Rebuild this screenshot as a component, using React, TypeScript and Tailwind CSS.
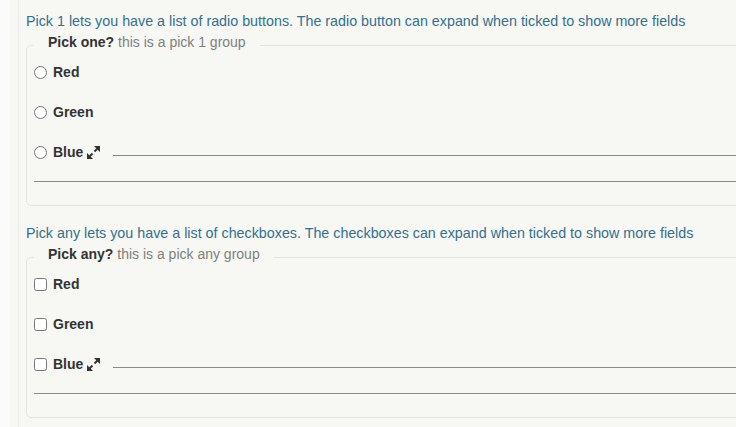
import React from "react";

const colours = ["Red", "Green", "Blue"];

function ExpandIcon() {
  return (
    <svg width="13" height="13" viewBox="0 0 13 13" className="shrink-0">
      <polygon points="13,0 7,0 13,6" fill="#333" />
      <line x1="11.5" y1="1.5" x2="7.5" y2="5.5" stroke="#333" strokeWidth="2" />
      <polygon points="0,13 0,7 6,13" fill="#333" />
      <line x1="1.5" y1="11.5" x2="5.5" y2="7.5" stroke="#333" strokeWidth="2" />
    </svg>
  );
}

function Group({ intro, title, note, type }: { intro: string; title: string; note: string; type: "radio" | "checkbox" }) {
  return (
    <div>
      <p className="h-5 leading-5 text-[14.3px] text-[#31708f] whitespace-nowrap">{intro}</p>
      <fieldset className="mt-[1px] w-[760px] border border-[#e3e4e0] rounded-[5px] pb-[23px]">
        <legend className="ml-[7px] pl-[14px] pr-[14px] pb-[6px] leading-5 text-[14px]">
          <span className="font-bold text-[#333]">{title}</span>{" "}
          <span className="text-[#808080]">{note}</span>
        </legend>
        <div className="pl-[7px]">
          <div className="flex flex-col gap-3">
            {colours.map((c) => (
              <label key={c} className="flex items-center h-7">
                <input type={type} name={title} className="w-[13px] h-[13px] shrink-0" />
                <span className="ml-[6px] font-bold text-[14px] text-[#333]">{c}</span>
                {c === "Blue" && (
                  <>
                    <span className="ml-[4px] flex"><ExpandIcon /></span>
                    <div className="flex-1 h-px bg-[#8a8a8a] mt-[6px] ml-[13px]" />
                  </>
                )}
              </label>
            ))}
          </div>
          <div className="h-px bg-[#8a8a8a] mt-[15px]" />
        </div>
      </fieldset>
    </div>
  );
}

export default function App() {
  return (
    <div className="w-[736px] h-[427px] overflow-hidden flex bg-[#f7f8f3]" style={{ fontFamily: '"Liberation Sans", Arial, sans-serif' }}>
      <div className="w-[10px] shrink-0 bg-[#fbfbf9]" />
      <div className="w-[9px] shrink-0 border-r border-[#e9eae6]" />
      <div className="flex-1 min-w-0 pl-[7px] pt-[11px] flex flex-col gap-[17px]">
        <Group
          intro="Pick 1 lets you have a list of radio buttons. The radio button can expand when ticked to show more fields"
          title="Pick one?"
          note="this is a pick 1 group"
          type="radio"
        />
        <Group
          intro="Pick any lets you have a list of checkboxes. The checkboxes can expand when ticked to show more fields"
          title="Pick any?"
          note="this is a pick any group"
          type="checkbox"
        />
      </div>
    </div>
  );
}
